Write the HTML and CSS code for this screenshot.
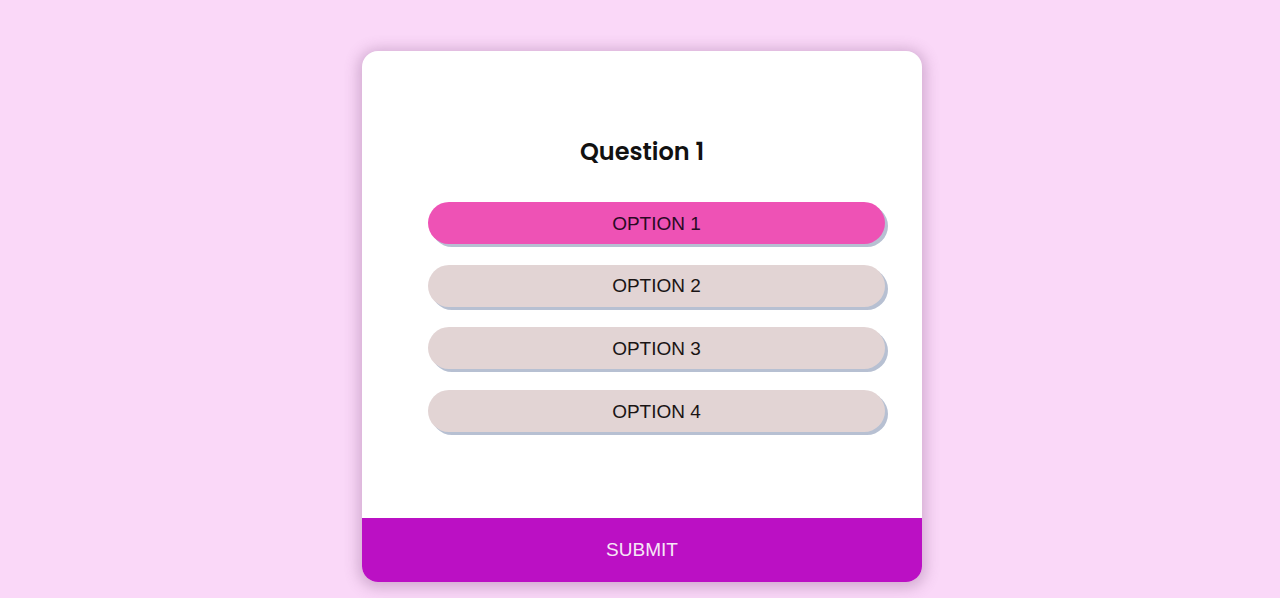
FILE: index.html
```html
<!DOCTYPE html>
<html>
<head>
<meta charset="utf-8">
<link rel="stylesheet" href="styles.css">
</head>
<body>
<div class="page">
  <div class="card">
    <div class="content">
      <h2 class="question">Question 1</h2>
      <ul class="options">
        <li class="option selected">OPTION 1</li>
        <li class="option">OPTION 2</li>
        <li class="option">OPTION 3</li>
        <li class="option">OPTION 4</li>
      </ul>
    </div>
    <button class="submit">SUBMIT</button>
  </div>
</div>
</body>
</html>
```

FILE: styles.css
```css
html, body {
  margin: 0;
  padding: 0;
}
body {
  background: #fad8f8;
  font-family: "Liberation Sans", Arial, sans-serif;
  height: 598px;
  overflow: hidden;
}
.page {
  display: flex;
  justify-content: center;
  padding: 51px 0 0 4px;
}
.card {
  width: 560px;
  height: 531px;
  background: #fff;
  border-radius: 16px;
  box-shadow: 0 2px 14px 4px rgba(120, 70, 120, 0.3);
  display: flex;
  flex-direction: column;
  overflow: hidden;
}
.content {
  flex: 1;
  padding: 0 37px 0 66px;
}
.question {
  margin: 85px 0 34px -66px;
  width: 560px;
  text-align: center;
  font-family: "Poppins", "Lato", sans-serif;
  font-weight: 600;
  font-size: 24px;
  color: #111;
  line-height: 32px;
}
.options {
  list-style: none;
  margin: 0;
  padding: 0;
  display: flex;
  flex-direction: column;
  gap: 20.7px;
}
.option {
  width: 457px;
  height: 42px;
  padding-top: 1px;
  box-sizing: border-box;
  border-radius: 21px;
  background: #e2d4d4;
  box-shadow: 3px 3px 0 #b7c0d2;
  display: flex;
  align-items: center;
  justify-content: center;
  font-size: 19px;
  color: #1a1414;
}
.option.selected {
  background: #ee52b5;
  color: #2a0a24;
}
.submit {
  height: 64px;
  border: none;
  background: #bb10c4;
  color: #f6e6f6;
  font-family: "Liberation Sans", Arial, sans-serif;
  font-size: 19px;
  padding: 0;
  margin: 0;
}
```
